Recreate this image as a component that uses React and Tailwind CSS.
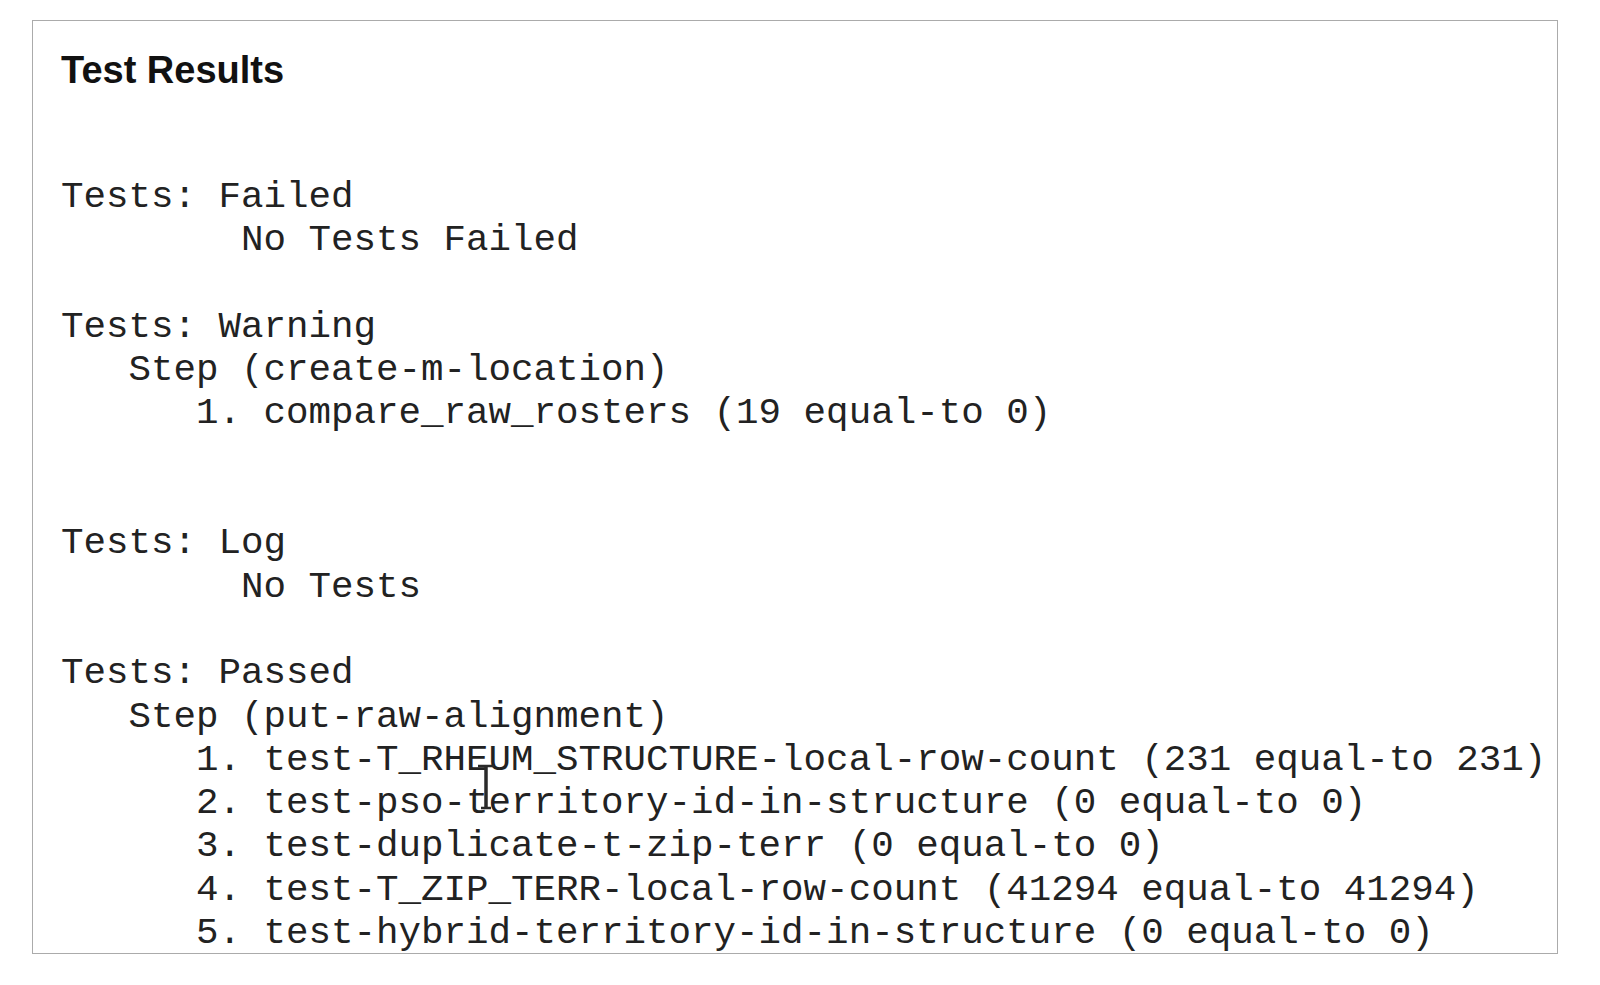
import React from "react";

const lines = [
  "Tests: Failed",
  "        No Tests Failed",
  "",
  "Tests: Warning",
  "   Step (create-m-location)",
  "      1. compare_raw_rosters (19 equal-to 0)",
  "",
  "",
  "Tests: Log",
  "        No Tests",
  "",
  "Tests: Passed",
  "   Step (put-raw-alignment)",
  "      1. test-T_RHEUM_STRUCTURE-local-row-count (231 equal-to 231)",
  "      2. test-pso-territory-id-in-structure (0 equal-to 0)",
  "      3. test-duplicate-t-zip-terr (0 equal-to 0)",
  "      4. test-T_ZIP_TERR-local-row-count (41294 equal-to 41294)",
  "      5. test-hybrid-territory-id-in-structure (0 equal-to 0)",
];

export default function App() {
  return (
    <div className="w-[1600px] h-[985px] bg-white overflow-hidden pt-[20px] pl-[32px]">
      <div className="relative w-[1526px] h-[934px] border border-[#ababab] pt-[30px] pl-[28px]">
        <div
          className="text-[38px] leading-[38px] font-bold text-[#111]"
          style={{ fontFamily: '"Liberation Sans", Arial, sans-serif' }}
        >
          Test Results
        </div>
        <div
          className="mt-[87px] whitespace-pre text-[37.5px] leading-[43.3px] text-[#222]"
          style={{ fontFamily: '"Liberation Mono", "Courier New", monospace' }}
        >
          {lines.map((l, i) => (
            <div key={i} className="h-[43.3px]">
              {l}
            </div>
          ))}
        </div>
        <svg
          className="absolute left-[441px] top-[742px]"
          width="24"
          height="48"
          viewBox="0 0 24 48"
        >
          <path d="M4 3 H20" stroke="#2a2a2a" strokeWidth="2.5" fill="none" />
          <path d="M12 3 V45" stroke="#2a2a2a" strokeWidth="3.5" fill="none" />
          <path d="M7 45 H17" stroke="#2a2a2a" strokeWidth="2.5" fill="none" />
        </svg>
      </div>
    </div>
  );
}
